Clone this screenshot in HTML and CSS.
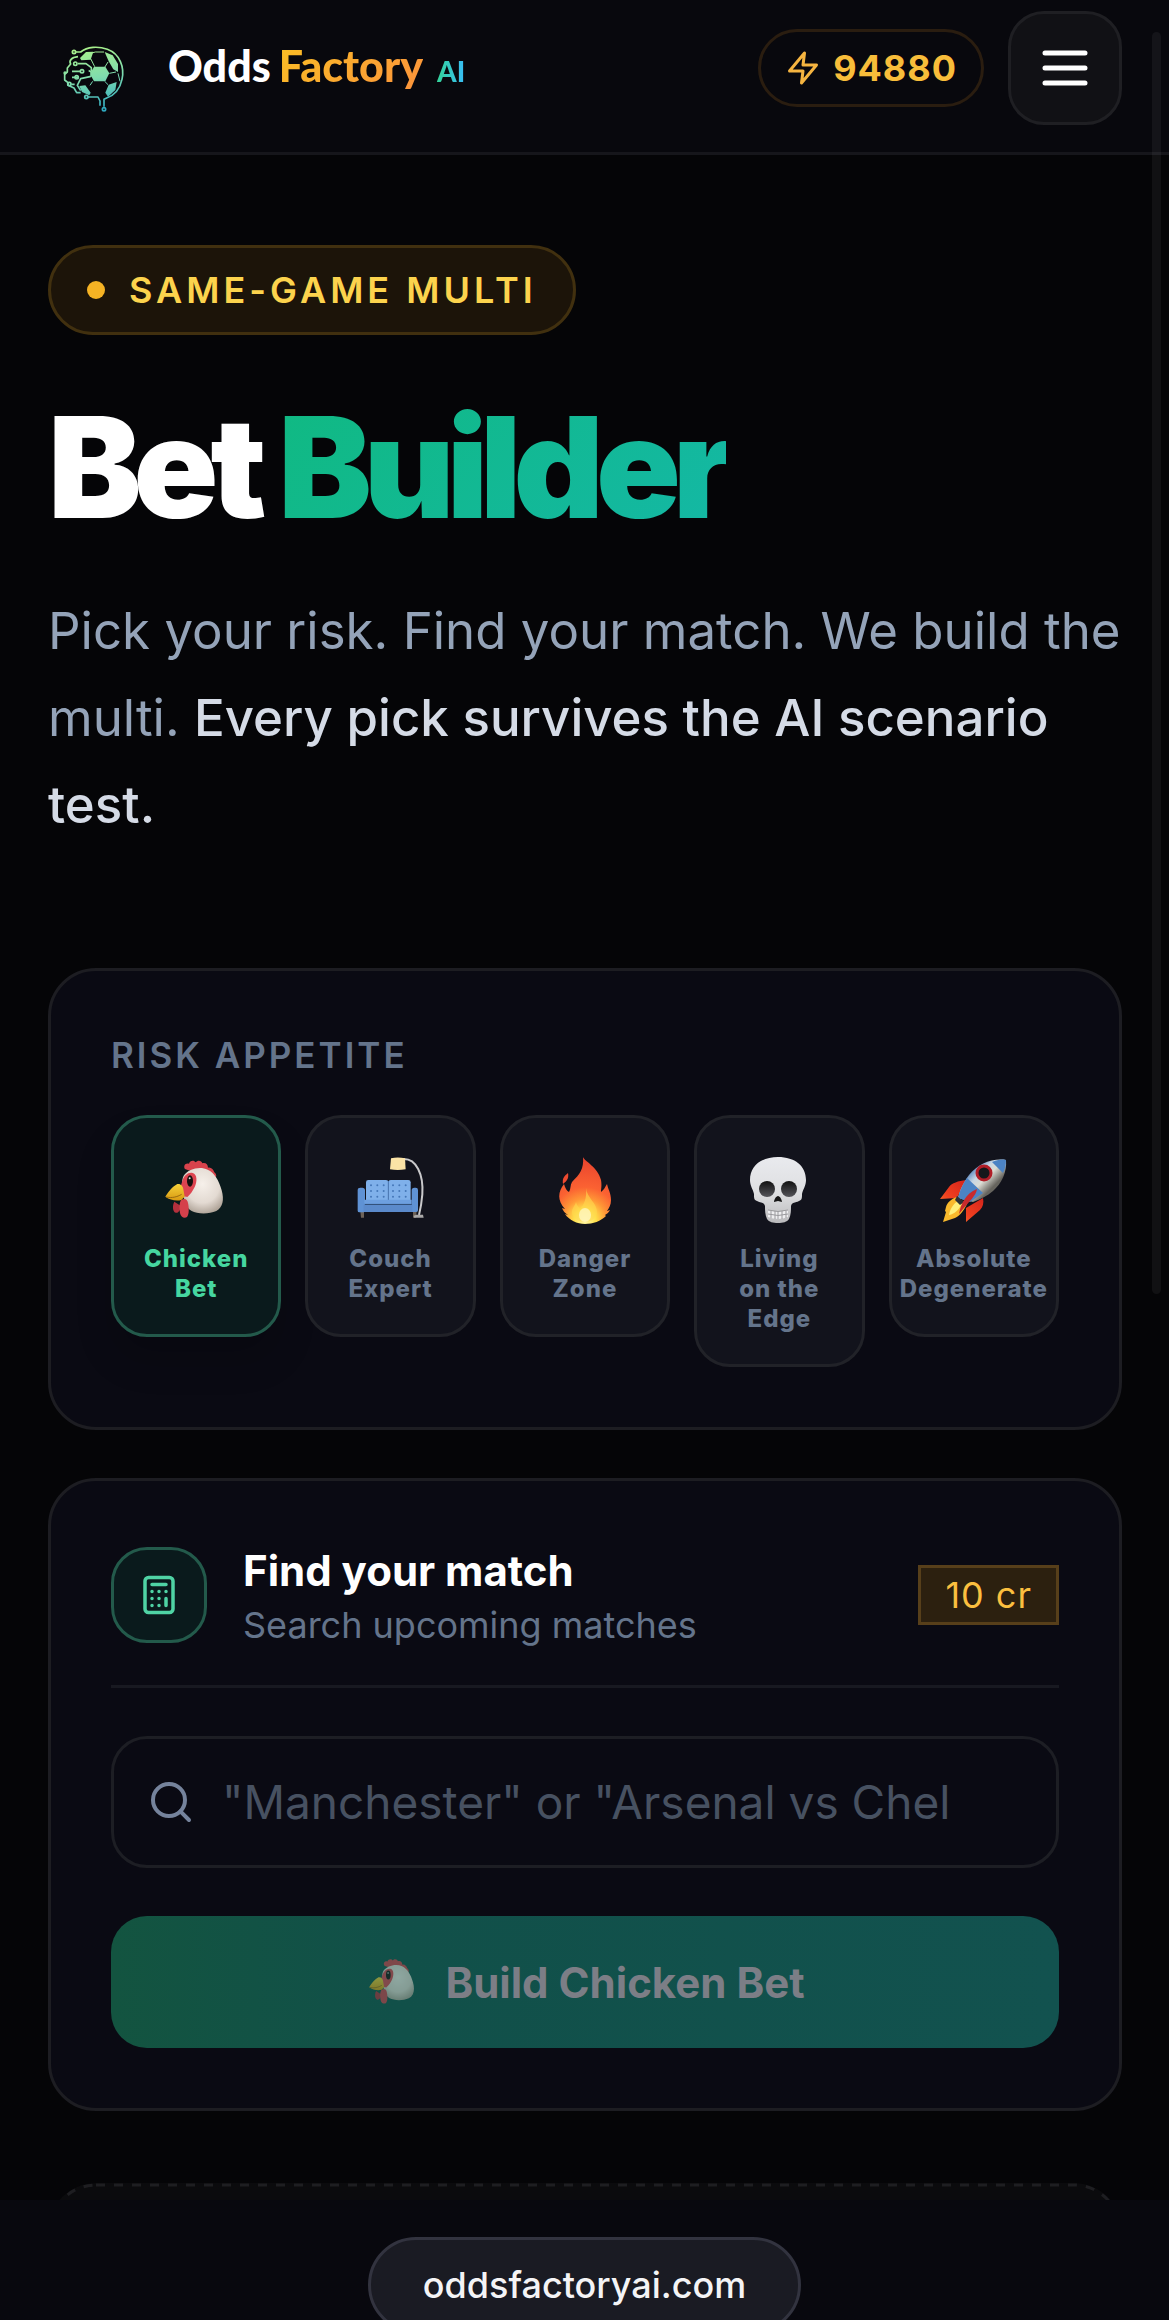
FILE: index.html
```html
<!DOCTYPE html>
<html lang="en">
<head>
    <meta charset="UTF-8">
    <meta name="viewport" content="width=device-width, initial-scale=1.0">
    <title>Bet Builder - Odds Factory AI</title>
    <link rel="stylesheet" href="styles.css">
</head>
<body>
    <!-- Shared icons -->
    <svg class="sprite" aria-hidden="true">
        <defs>
            <radialGradient id="chickenHead" cx="0.5" cy="0.35" r="0.7">
                <stop offset="0" stop-color="#f6f0ea"/>
                <stop offset="0.6" stop-color="#e3dad2"/>
                <stop offset="1" stop-color="#a89c90"/>
            </radialGradient>
            <linearGradient id="beak" x1="0" y1="0" x2="0" y2="1">
                <stop offset="0" stop-color="#f5d13a"/>
                <stop offset="1" stop-color="#d99a12"/>
            </linearGradient>
        </defs>
        <symbol id="chicken" viewBox="15 27 216 216">
            <path fill="#d8434c" d="M90 72c-6-9 1-20 12-16 2-10 15-12 20-4 6-8 18-6 20 3 10-3 17 4 17 13 10-2 16 6 19 14 5 4 7 9 5 14l-40-14-43-6z"/>
            <path fill="#b5303c" d="M58 170c-6 10-6 30 4 33 8 3 14-8 16-20z"/>
            <path fill="url(#chickenHead)" d="M86 92c14-20 48-29 72-18 20 9 34 32 42 62 8 28 4 52-16 62-22 10-58 9-74 0-16-10-22-28-24-46-4-22-8-44 0-60z"/>
            <path fill="#dd4450" d="M82 108c6-18 18-27 31-24 14 4 14 26 6 42-6 12-12 22-22 30l-18-4c-2-16-3-30 3-44z"/>
            <path fill="#d5404b" d="M78 166c10-8 19-4 21 8 3 14 4 34-3 42-8 6-19 0-21-12-2-12-3-28 3-38z"/>
            <path fill="url(#beak)" d="M31 155c8-12 20-30 36-38 10-2 17 6 18 16l4 22-10 10c-16 4-34 0-48-10z"/>
            <path fill="none" stroke="#9a6a10" stroke-width="3" d="M34 156c16 4 32 0 46-8"/>
            <ellipse cx="105" cy="108" rx="9" ry="17" fill="#17100e"/>
            <circle cx="104" cy="100" r="3" fill="#ddd"/>
        </symbol>
    </svg>

    <header class="header">
        <a href="#" class="brand">
            <svg class="brand-logo" viewBox="-18 -51 270 270" aria-hidden="true">
                <defs>
                    <linearGradient id="brain" gradientUnits="userSpaceOnUse" x1="100" y1="20" x2="140" y2="210">
                        <stop offset="0" stop-color="#a9f08a"/>
                        <stop offset="0.5" stop-color="#7fdcae"/>
                        <stop offset="1" stop-color="#2fa9c0"/>
                    </linearGradient>
                </defs>
                <g fill="none" stroke="url(#brain)" stroke-width="5" stroke-linejoin="round">
                    <path d="M66 36h14c20-16 52-18 80-8 38 14 52 54 44 90-6 28-24 48-46 56l-8 4v22"/>
                    <path d="M102 171h30l6 12v14"/>
                    <path d="M72 71h24l16 12v12M54 94h24M74 112h-20M52 133h10"/>
                    <path d="M72 50c-20 2-28 12-22 22l-10 12v12l-8 6v18l10 8v8l18 8 8 14h12"/>
                    <path d="M104 92c10 2 12 14 4 18l-28 6-10 20 10 16"/>
                    <circle cx="60" cy="36" r="5"/>
                    <circle cx="64" cy="71" r="5"/>
                    <circle cx="84" cy="94" r="5"/>
                    <circle cx="68" cy="112" r="5"/>
                    <circle cx="46" cy="132" r="5"/>
                    <circle cx="97" cy="171" r="5"/>
                    <circle cx="150" cy="208" r="5"/>
                </g>
                <g fill="none" stroke="url(#brain)" stroke-width="3">
                    <path d="M110 56l12 24M162 66l-10 16M166 100l20-4M152 124l10 10M116 124l-8 12M110 40l14-4h26M192 100l6 24"/>
                </g>
                <g fill="url(#brain)">
                    <circle cx="33" cy="99" r="5"/>
                    <path d="M78 54l18-18 22-1-8 24-28 2z"/>
                    <path d="M120 80h34l12 20-12 24h-34l-12-22z"/>
                    <path d="M152 36l24 10 16 26v24l-14-8-14-24z"/>
                    <path d="M164 134l24-8-4 24-22 20-8-12z"/>
                    <path d="M76 138l18-2 16 22-4 8-22-10z"/>
                </g>
            </svg>
            <span class="brand-name"><span class="brand-white">Odds</span><span class="brand-gold">Factory</span><span class="brand-ai">AI</span></span>
        </a>
        <div class="header-actions">
            <a href="#" class="credits">
                <svg class="credits-icon" viewBox="0 0 24 24" aria-hidden="true">
                    <path d="M13 2L3 14h9l-1 8 10-12h-9l1-8z"/>
                </svg>
                <span>94880</span>
            </a>
            <button type="button" class="menu-button" aria-label="Menu">
                <svg viewBox="0 0 24 24" aria-hidden="true">
                    <path d="M4 6h16M4 12h16M4 18h16"/>
                </svg>
            </button>
        </div>
    </header>

    <main class="main">
        <div class="badge"><span class="badge-dot"></span>SAME-GAME MULTI</div>
        <h1 class="title">Bet <span class="title-accent">Builder</span></h1>
        <p class="intro">Pick your risk. Find your match. We build the multi. <strong>Every pick survives the AI scenario test.</strong></p>

        <!-- Risk level -->
        <section class="card">
            <h2 class="card-label">RISK APPETITE</h2>
            <div class="risks">
                <button type="button" class="risk active">
                    <svg class="risk-icon" aria-hidden="true"><use href="#chicken"/></svg>
                    <span>Chicken Bet</span>
                </button>
                <button type="button" class="risk">
                    <svg class="risk-icon" viewBox="598 27 216 216" aria-hidden="true">
                        <path d="M742 42c40-2 62 46 58 106-2 24-6 46-10 62" fill="none" stroke="#c9c9cb" stroke-width="6"/>
                        <path d="M706 40q20-5 42 0l2 33q-24 4-47 0z" fill="#fbe3a6"/>
                        <path d="M614 198h11v20h-9zM772 198h11l-2 20h-9z" fill="#6d6258"/>
                        <rect x="631" y="105" width="67" height="66" rx="7" fill="#7fb0ea"/>
                        <rect x="698" y="105" width="67" height="66" rx="7" fill="#7fb0ea"/>
                        <path d="M698 108v66" stroke="#4a78b5" stroke-width="3"/>
                        <g fill="#4577b8">
                            <circle cx="646" cy="121" r="3"/><circle cx="665" cy="121" r="3"/><circle cx="684" cy="121" r="3"/>
                            <circle cx="712" cy="121" r="3"/><circle cx="731" cy="121" r="3"/><circle cx="750" cy="121" r="3"/>
                            <circle cx="646" cy="138" r="3"/><circle cx="665" cy="138" r="3"/><circle cx="684" cy="138" r="3"/>
                            <circle cx="712" cy="138" r="3"/><circle cx="731" cy="138" r="3"/><circle cx="750" cy="138" r="3"/>
                            <circle cx="646" cy="155" r="3"/><circle cx="665" cy="155" r="3"/><circle cx="684" cy="155" r="3"/>
                            <circle cx="712" cy="155" r="3"/><circle cx="731" cy="155" r="3"/><circle cx="750" cy="155" r="3"/>
                        </g>
                        <path d="M606 134q0-6 8-6h6q8 0 8 8v62q0 4-5 4h-12q-5 0-5-5zM768 136q0-8 8-8h4q7 0 7 7v61q0 5-5 5h-14z" fill="#5f92d4"/>
                        <path d="M626 164h142v13h-142z" fill="#6d9fdf"/>
                        <path d="M624 179h146v22h-146z" fill="#5b8acb"/>
                        <path d="M626 178h142" stroke="#3f6ba6" stroke-width="2"/>
                        <path d="M774 212l8-3h20l2 9h-29z" fill="#aaa9a8"/>
                    </svg>
                    <span>Couch Expert</span>
                </button>
                <button type="button" class="risk">
                    <svg class="risk-icon" viewBox="0 0 72 72" aria-hidden="true">
                        <defs>
                            <radialGradient id="fire" gradientUnits="userSpaceOnUse" cx="36" cy="66" r="60">
                                <stop offset="0" stop-color="#fff9b0"/>
                                <stop offset="0.18" stop-color="#ffe04a"/>
                                <stop offset="0.36" stop-color="#ff9636"/>
                                <stop offset="0.55" stop-color="#fb6232"/>
                                <stop offset="1" stop-color="#ea452e"/>
                            </radialGradient>
                        </defs>
                        <path fill="url(#fire)" d="M34 3c1 4 15 10 18 23 1 6 0 9 0 12 3-2 4-5 6-8 1 5 4 9 4 16 0 5-2 8-4 11l3-1c-1 2-3 4-5 5l1 1c-5 5-13 8-21 8s-16-4-20-10l3 1c-3-2-5-4-6-7l3 1c-8-9-7-17-1-25 1 4 3 7 5 8 2-3 1-7 3-10 8-8 12-13 11-25z"/>
                        <path fill="#ee4a30" d="M19 19c1 5-1 8-5 11-1-5 1-8 5-11z"/>
                        <path fill="#ffd84e" d="M37 34c1 10 11 15 11 24 0 6-6 10-12 10s-13-4-13-10c0-4 3-6 4-10 1 4 3 5 4 7 4-4 7-11 6-21z" opacity="0.6"/>
                        <ellipse cx="36" cy="61" rx="6" ry="7" fill="#fffbd0" opacity="0.7"/>
                    </svg>
                    <span>Danger Zone</span>
                </button>
                <button type="button" class="risk">
                    <svg class="risk-icon" viewBox="0 0 72 72" aria-hidden="true">
                        <defs>
                            <linearGradient id="bone" x1="0" y1="0" x2="0" y2="1">
                                <stop offset="0" stop-color="#e9eaee"/>
                                <stop offset="0.55" stop-color="#dedfe1"/>
                                <stop offset="1" stop-color="#b9b9bb"/>
                            </linearGradient>
                            <linearGradient id="socket" x1="0" y1="0" x2="0" y2="1">
                                <stop offset="0" stop-color="#111"/>
                                <stop offset="1" stop-color="#55555a"/>
                            </linearGradient>
                        </defs>
                        <path fill="url(#bone)" d="M35 3c17 0 28 9 28 23 0 6-3 9-4 14 0 4 0 6-3 7-4 2-7 1-8 5 0 4 0 9-2 13-2 3-6 4-11 4s-9-1-11-4c-2-4-2-9-2-13-1-4-4-3-8-5-3-1-3-3-3-7-1-5-4-8-4-14C7 12 18 3 35 3z"/>
                        <ellipse cx="24" cy="35" rx="8" ry="8" fill="url(#socket)"/>
                        <ellipse cx="46" cy="35" rx="8" ry="8" fill="url(#socket)"/>
                        <path fill="#161616" d="M35 42c2 0 4 4 4 6l-4-1-4 1c0-2 2-6 4-6z"/>
                        <path fill="#efeff1" d="M25 56q10 3 20 0v7q-10 4-20 0z"/>
                        <path fill="none" stroke="#9a9a9d" stroke-width="1" d="M25 56q10 3 20 0M25 60q10 3 20 0M28 57v7M32 57v8M35 58v7M39 57v8M43 57v7"/>
                    </svg>
                    <span>Living on the Edge</span>
                </button>
                <button type="button" class="risk">
                    <svg class="risk-icon" viewBox="0 0 72 72" aria-hidden="true">
                        <defs>
                            <linearGradient id="hull" gradientUnits="userSpaceOnUse" x1="30" y1="18" x2="50" y2="38">
                                <stop offset="0" stop-color="#4d7db8"/>
                                <stop offset="0.35" stop-color="#c8d6e4"/>
                                <stop offset="0.6" stop-color="#dcdcd4"/>
                                <stop offset="1" stop-color="#66645e"/>
                            </linearGradient>
                            <linearGradient id="fin" x1="1" y1="0" x2="0" y2="1">
                                <stop offset="0" stop-color="#c5161a"/>
                                <stop offset="0.6" stop-color="#f0401f"/>
                                <stop offset="1" stop-color="#fba53c"/>
                            </linearGradient>
                        </defs>
                        <path fill="url(#fin)" d="M28 26c-8 1-14 3-17 7L2 45l17-1zM45 44c1 5 0 9-3 12L28 68V54z"/>
                        <path fill="#f9b92c" d="M19 43c-6 2-10 6-11 10l-1 4 1 1-3 10 9-3 3-1c5-2 9-8 12-14z"/>
                        <path fill="#fff07a" d="M20 47c-5 3-8 8-9 14 6-1 10-6 13-11z"/>
                        <path fill="url(#hull)" d="M68 6c1 12-4 23-13 31-6 5-12 8-20 11L20 44c2-8 5-15 11-23C40 10 54 4 68 6z"/>
                        <path fill="#4c83c4" d="M68 6c0 5-1 9-3 13L54 8c5-2 9-3 14-2zM29 24l16 15-13 9-12-4c2-8 5-14 9-20z"/>
                        <path fill="#2b3036" d="M19 42l7 6-4 3-5-5z"/>
                        <circle cx="46" cy="19" r="7" fill="#15171b" stroke="#b01d27" stroke-width="3"/>
                        <path fill="#c92a2c" d="M39 35c-1 7-7 11-18 25 2-10 6-20 18-25z"/>
                    </svg>
                    <span>Absolute Degenerate</span>
                </button>
            </div>
        </section>

        <!-- Match search -->
        <section class="card">
            <div class="match-header">
                <div class="match-icon">
                    <svg viewBox="0 0 24 24" aria-hidden="true">
                        <rect x="4" y="2" width="16" height="20" rx="2"/>
                        <path d="M8 6h8M16 14v4M16 10h.01M12 10h.01M8 10h.01M12 14h.01M8 14h.01M12 18h.01M8 18h.01"/>
                    </svg>
                </div>
                <div class="match-text">
                    <h2><label for="match">Find your match</label></h2>
                    <p>Search upcoming matches</p>
                </div>
                <span class="cost">10 cr</span>
            </div>
            <form class="match-form">
                <div class="search">
                    <svg class="search-icon" viewBox="0 0 24 24" aria-hidden="true">
                        <circle cx="11" cy="11" r="8"/>
                        <path d="M21 21l-4.3-4.3"/>
                    </svg>
                    <input type="text" id="match" name="match" placeholder='"Manchester" or "Arsenal vs Chel'>
                </div>
                <button type="submit" class="build-button" disabled>
                    <svg aria-hidden="true"><use href="#chicken"/></svg>
                    <span>Build Chicken Bet</span>
                </button>
            </form>
        </section>

        <!-- Empty state -->
        <div class="results">
            <svg class="results-outline" aria-hidden="true"><rect x="2" y="2" rx="46"/></svg>
        </div>
    </main>

    <div class="scroll-thumb"></div>

    <footer class="bottom-bar">
        <a href="#" class="site-pill">oddsfactoryai.com</a>
    </footer>
</body>
</html>
```
FILE: styles.css
```css
* {
    box-sizing: border-box;
}
html,
body {
    height: 100%;
    overflow: hidden;
}
body {
    font-family: Inter, "Liberation Sans", sans-serif;
    background: #050507;
    color: #fff;
    margin: 0;
}
h1, h2, p {
    margin: 0;
}
button, input {
    font-family: inherit;
}
a {
    color: inherit;
    text-decoration: none;
}
.sprite {
    position: absolute;
    width: 0;
    height: 0;
}

/* Header */
.header {
    display: flex;
    align-items: center;
    justify-content: space-between;
    padding: 11px 47px 27px 48px;
    background: #08080d;
    border-bottom: 3px solid #16161b;
}
.brand {
    display: flex;
    align-items: center;
    gap: 30px;
}
.brand-logo {
    width: 90px;
    height: 90px;
}
.brand-name {
    display: flex;
    align-items: baseline;
    font-family: Lato, sans-serif;
    font-size: 43px;
    font-weight: 900;
    line-height: 50px;
}
.brand-gold {
    margin-left: 8px;
    background: linear-gradient(135deg, #fbbf24, #fb923c);
    background-clip: text;
    color: transparent;
}
.brand-ai {
    margin-left: 14px;
    font-size: 28px;
    background: linear-gradient(90deg, #34d399, #38bdf8);
    background-clip: text;
    color: transparent;
}
.header-actions {
    display: flex;
    align-items: center;
    gap: 24px;
}
.credits {
    display: flex;
    align-items: center;
    gap: 12px;
    height: 78px;
    padding: 0 24px;
    border: 3px solid #2a1d10;
    border-radius: 39px;
    color: #f8bd3a;
    font-size: 36px;
    font-weight: 700;
    letter-spacing: 1px;
}
.credits-icon {
    width: 36px;
    height: 36px;
    fill: none;
    stroke: #f5b440;
    stroke-width: 2;
    stroke-linejoin: round;
}
.menu-button {
    display: flex;
    align-items: center;
    justify-content: center;
    width: 114px;
    height: 114px;
    padding: 0;
    background: #111115;
    border: 3px solid #1f1f23;
    border-radius: 36px;
}
.menu-button svg {
    width: 60px;
    height: 60px;
    stroke: #fff;
    stroke-width: 2;
    stroke-linecap: round;
}

/* Hero */
.main {
    padding: 90px 47px 0 48px;
}
.badge {
    display: inline-flex;
    align-items: center;
    gap: 24px;
    height: 90px;
    padding: 0 36px;
    background: #1c1409;
    border: 3px solid #41300f;
    border-radius: 45px;
    color: #fcd34d;
    font-size: 36px;
    font-weight: 600;
    letter-spacing: 4px;
    vertical-align: top;
}
.badge-dot {
    width: 18px;
    height: 18px;
    border-radius: 50%;
    background: #f5b324;
}
.title {
    margin-top: 60px;
    font-size: 140px;
    font-weight: 900;
    line-height: 144px;
    letter-spacing: -8px;
}
.title-accent {
    background: linear-gradient(135deg, #10b981, #14b8a6);
    background-clip: text;
    color: transparent;
}
.intro {
    margin: 48px 0 120px;
    font-size: 51px;
    line-height: 87px;
    color: #94a3b8;
}
.intro strong {
    color: #d5dbe6;
    font-weight: 500;
}

/* Cards */
.card {
    margin-bottom: 48px;
    padding: 60px;
    background: #0a0a13;
    border: 3px solid #1d1d22;
    border-radius: 48px;
}
.card-label {
    font-size: 35px;
    font-weight: 600;
    line-height: 48px;
    letter-spacing: 3px;
    color: #64748b;
}
.risks {
    display: grid;
    grid-template-columns: repeat(5, minmax(0, 1fr));
    gap: 24px;
    align-items: start;
    margin-top: 36px;
}
.risk {
    display: flex;
    flex-direction: column;
    align-items: center;
    gap: 18px;
    padding: 36px 30px 30px;
    background: #12131c;
    border: 3px solid #212228;
    border-radius: 36px;
    color: #64748b;
    font-size: 24px;
    font-weight: 800;
    line-height: 30px;
    letter-spacing: 1px;
    text-align: center;
}
.risk.active {
    background: #0a1a1c;
    border-color: #235a4b;
    color: #46d6a0;
    box-shadow: 0 24px 36px rgba(0, 0, 0, 0.15);
}
.risk-icon {
    width: 72px;
    height: 72px;
}

/* Match search */
.match-header {
    display: flex;
    align-items: center;
    gap: 36px;
    padding-bottom: 36px;
    border-bottom: 3px solid #181921;
}
.match-icon {
    display: flex;
    align-items: center;
    justify-content: center;
    width: 96px;
    height: 96px;
    background: #0a1a1c;
    border: 3px solid #235a4b;
    border-radius: 36px;
}
.match-icon svg {
    width: 42px;
    height: 42px;
    fill: none;
    stroke: #4fd3a4;
    stroke-width: 2;
    stroke-linecap: round;
    stroke-linejoin: round;
}
.match-text {
    flex: 1;
}
.match-text h2 {
    font-size: 42px;
    font-weight: 700;
    line-height: 60px;
}
.match-text p {
    font-size: 36px;
    line-height: 48px;
    color: #64748b;
}
.cost {
    padding: 0 24px;
    background: #2c200f;
    border: 3px solid #573f1a;
    color: #fbbf3f;
    font-size: 36px;
    line-height: 54px;
    letter-spacing: 1px;
}
.match-form {
    display: flex;
    flex-direction: column;
    gap: 48px;
    margin-top: 48px;
}
.search {
    display: flex;
    align-items: center;
    gap: 27px;
    height: 132px;
    padding: 0 33px;
    border: 3px solid #1d1e24;
    border-radius: 36px;
}
.search-icon {
    flex: none;
    width: 48px;
    height: 48px;
    fill: none;
    stroke: #75839c;
    stroke-width: 2;
    stroke-linecap: round;
}
.search input {
    flex: 1;
    min-width: 0;
    height: 100%;
    padding: 0;
    background: none;
    border: 0;
    outline: 0;
    color: #fff;
    font-size: 46px;
}
.search input::placeholder {
    color: #475161;
}
.build-button {
    display: flex;
    align-items: center;
    justify-content: center;
    gap: 24px;
    height: 132px;
    padding: 0;
    background: linear-gradient(90deg, #135440, #115049 30%, #12524f);
    border: 0;
    border-radius: 36px;
    color: #7c7e86;
    font-size: 42px;
    font-weight: 700;
}
.build-button svg {
    width: 56px;
    height: 56px;
    opacity: 0.55;
}
.results {
    height: 240px;
    margin-top: 72px;
    background: #0b0b0d;
    border-radius: 48px;
}
.results-outline {
    display: block;
    width: 100%;
    height: 100%;
}
.results-outline rect {
    width: calc(100% - 4px);
    height: calc(100% - 4px);
    fill: none;
    stroke: #1e1e21;
    stroke-width: 3;
    stroke-dasharray: 9;
}

/* Overlays */
.scroll-thumb {
    position: fixed;
    top: 32px;
    right: 8px;
    width: 9px;
    height: 1262px;
    border-radius: 5px;
    background: rgba(255, 255, 255, 0.05);
}
.bottom-bar {
    position: fixed;
    left: 0;
    right: 0;
    bottom: 0;
    display: flex;
    align-items: flex-start;
    justify-content: center;
    height: 120px;
    padding-top: 37px;
    background: #08080e;
    overflow: hidden;
}
.site-pill {
    flex: none;
    height: 96px;
    padding: 0 52px;
    background: #1a1b23;
    border: 3px solid #32333f;
    border-radius: 48px;
    color: #f4f4f6;
    font-size: 36px;
    font-weight: 500;
    line-height: 90px;
}
```
